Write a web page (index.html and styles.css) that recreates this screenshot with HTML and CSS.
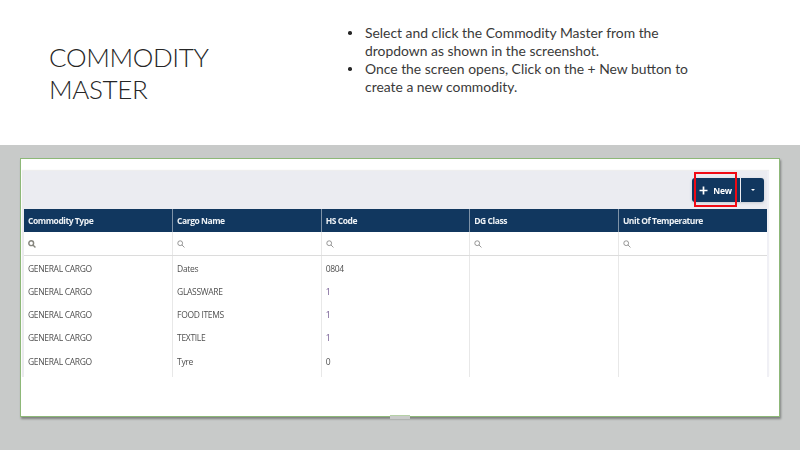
FILE: index.html
```html
<!DOCTYPE html>
<html lang="en">
<head>
<meta charset="utf-8">
<title>Commodity Master</title>
<link rel="stylesheet" href="styles.css">
</head>
<body>
<section class="intro">
  <h1 class="title">COMMODITY MASTER</h1>
  <ul class="steps">
    <li>Select and click the Commodity Master from the dropdown as shown in the screenshot.</li>
    <li>Once the screen opens, Click on the + New button to create a new commodity.</li>
  </ul>
</section>
<section class="stage">
  <div class="card">
    <div class="panel">
      <div class="toolbar">
        <div class="btn-group">
          <button class="btn btn-new"><svg class="plus" viewBox="0 0 9 9" width="9" height="9"><path d="M4.5 0.5v8M0.5 4.5h8" stroke="#fff" stroke-width="1.7" fill="none"/></svg><span>New</span></button>
          <button class="btn btn-caret"><span class="caret"></span></button>
        </div>
        <div class="highlight"></div>
      </div>
      <table class="grid">
        <thead>
          <tr class="head">
            <th>Commodity Type</th><th>Cargo Name</th><th>HS Code</th><th>DG Class</th><th>Unit Of Temperature</th>
          </tr>
          <tr class="filter">
            <td><svg class="search strong" viewBox="0 0 10 10" width="8" height="8"><circle cx="4" cy="4" r="3"/><path d="M6.2 6.2L9.3 9.3"/></svg></td>
            <td><svg class="search" viewBox="0 0 10 10" width="8" height="8"><circle cx="4" cy="4" r="3"/><path d="M6.2 6.2L9.3 9.3"/></svg></td>
            <td><svg class="search" viewBox="0 0 10 10" width="8" height="8"><circle cx="4" cy="4" r="3"/><path d="M6.2 6.2L9.3 9.3"/></svg></td>
            <td><svg class="search" viewBox="0 0 10 10" width="8" height="8"><circle cx="4" cy="4" r="3"/><path d="M6.2 6.2L9.3 9.3"/></svg></td>
            <td><svg class="search" viewBox="0 0 10 10" width="8" height="8"><circle cx="4" cy="4" r="3"/><path d="M6.2 6.2L9.3 9.3"/></svg></td>
          </tr>
        </thead>
        <tbody>
          <tr><td>GENERAL CARGO</td><td>Dates</td><td>0804</td><td></td><td></td></tr>
          <tr><td>GENERAL CARGO</td><td>GLASSWARE</td><td class="num">1</td><td></td><td></td></tr>
          <tr><td>GENERAL CARGO</td><td>FOOD ITEMS</td><td class="num">1</td><td></td><td></td></tr>
          <tr><td>GENERAL CARGO</td><td>TEXTILE</td><td class="num">1</td><td></td><td></td></tr>
          <tr><td>GENERAL CARGO</td><td>Tyre</td><td>0</td><td></td><td></td></tr>
        </tbody>
      </table>
    </div>
  </div>
</section>
</body>
</html>
```
FILE: styles.css
```css
* { box-sizing: border-box; }
html, body { margin: 0; height: 100%; }
body { width: 800px; height: 450px; overflow: hidden; background: #c8cac9; font-family: "Open Sans", sans-serif; display: flex; flex-direction: column; }

.intro { height: 145px; background: #fff; display: flex; font-family: Lato, "Open Sans", sans-serif; color: #3a3a3a; flex: none; }
.title { margin: 0; padding: 41px 110px 0 49px; width: 330px; font-size: 26px; line-height: 32px; font-weight: 300; letter-spacing: -0.35px; color: #262626; }
.steps { margin: 0; padding: 24px 0 0 35px; width: 380px; list-style: none; font-size: 13.9px; line-height: 18px; }
.steps li { position: relative; }
.steps li::before { content: ""; position: absolute; left: -17px; top: 7px; width: 3.5px; height: 3.5px; border-radius: 50%; background: #262626; }

.stage { flex: 1; padding: 13px 20px 33px 20px; }
.card { position: relative; height: 259px; width: 760px; background: #fff; border: 1px solid #8db878; padding: 12px 10px 0 1px; box-shadow: 1px 1.5px 2px #7f8280; }
.card::after { content: ""; position: absolute; left: 369px; bottom: -3px; width: 20px; height: 3px; background: #c8cac9; border-top: 1px solid #b5d0a6; }
.panel { height: 206px; background: linear-gradient(#ebecf1 0 38px, #fff 38px); border-left: 2.5px solid #ebebee; border-right: 2px solid #f0f0f5; box-shadow: 0 -1px 1px #eee; filter: blur(0.3px); }
.toolbar { height: 38px; position: relative; display: flex; justify-content: flex-end; padding: 7px 3px 0 0; }
.btn-group { display: flex; gap: 1px; height: 24px; box-shadow: 0 1px 3px #c5c8d0; border-radius: 3px; }
.btn { border: 0; margin: 0; padding: 0; background: #11375f; color: #fff; font: 700 8.5px "Open Sans", sans-serif; letter-spacing: -0.3px; display: flex; align-items: center; justify-content: center; }
.btn-new { width: 48px; gap: 5px; border-radius: 3px 0 0 3px; padding-right: 1px; }
.btn-caret { width: 23px; border-radius: 0 3px 3px 0; }
.caret { width: 0; height: 0; border: 2.5px solid transparent; border-top: 2.5px solid #fff; border-bottom: 0; }
.highlight { position: absolute; right: 30.5px; top: 1px; width: 42.5px; height: 35px; border: 2px solid #f00a14; }

.grid { width: 743px; table-layout: fixed; border-collapse: collapse; font-size: 8.5px; letter-spacing: -0.33px; color: #505050; }
.grid th, .grid td { padding: 0 0 0 4px; text-align: left; }
.head th { height: 23px; background: #11375f; color: #eef2f6; font-weight: 700; letter-spacing: -0.45px; border-right: 1px solid #7f93a8; }
.head th:last-child { border-right: 0; }
.filter td { height: 23px; border-right: 1px solid #e8e8e8; border-bottom: 1px solid #dcdcdc; vertical-align: middle; padding-top: 2px; }
.filter td:last-child, tbody td:last-child { border-right: 0; }
tbody td { height: 23.2px; border-right: 1px solid #e8e8e8; padding-top: 1px; }
.grid tbody td { padding-top: 1px; }
tbody tr:first-child td { height: 24.5px; }
tbody tr:last-child td { height: 28px; vertical-align: top; padding-top: 6.5px; }
.num { color: #6a4f8a; }
.search { fill: none; stroke: #8a8a8a; stroke-width: 1.1; display: block; }
.search.strong { stroke: #86867e; stroke-width: 1.8; }
```
